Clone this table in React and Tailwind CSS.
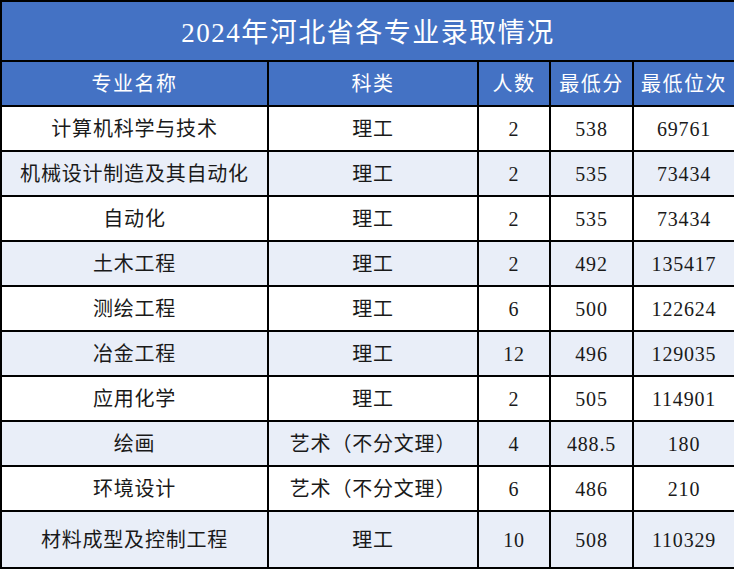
import React from 'react';

const rows = [
  ['计算机科学与技术', '理工', '2', '538', '69761'],
  ['机械设计制造及其自动化', '理工', '2', '535', '73434'],
  ['自动化', '理工', '2', '535', '73434'],
  ['土木工程', '理工', '2', '492', '135417'],
  ['测绘工程', '理工', '6', '500', '122624'],
  ['冶金工程', '理工', '12', '496', '129035'],
  ['应用化学', '理工', '2', '505', '114901'],
  ['绘画', '艺术（不分文理）', '4', '488.5', '180'],
  ['环境设计', '艺术（不分文理）', '6', '486', '210'],
  ['材料成型及控制工程', '理工', '10', '508', '110329'],
];

const headers = ['专业名称', '科类', '人数', '最低分', '最低位次'];

export default function App() {
  return (
    <div className="w-[734px] h-[569px] bg-white font-['Liberation_Serif','Noto_Sans_CJK_SC',serif]">
      <table className="w-[734px] table-fixed border-collapse border-2 border-black">
        <colgroup>
          <col className="w-[267px]" />
          <col className="w-[210px]" />
          <col className="w-[72px]" />
          <col className="w-[83px]" />
          <col className="w-[102px]" />
        </colgroup>
        <thead>
          <tr className="h-[60px] bg-[#4472c4]">
            <th colSpan={5} className="border-2 border-black text-white text-[27px] font-normal tracking-[1.5px] pt-1">
              2024年河北省各专业录取情况
            </th>
          </tr>
          <tr className="h-[45px] bg-[#4472c4]">
            {headers.map((h) => (
              <th key={h} className="border-2 border-black text-white text-[20px] font-normal tracking-[1.5px]">
                {h}
              </th>
            ))}
          </tr>
        </thead>
        <tbody>
          {rows.map((r, i) => (
            <tr
              key={r[0]}
              className={`${i === rows.length - 1 ? 'h-[57px]' : 'h-[45px]'} ${i % 2 === 1 ? 'bg-[#e9eef8]' : 'bg-white'}`}
            >
              {r.map((c, j) => (
                <td key={j} className="border-2 border-black text-center text-[20px] text-[#1a1a1a] tracking-[0.8px]">
                  {c}
                </td>
              ))}
            </tr>
          ))}
        </tbody>
      </table>
    </div>
  );
}
